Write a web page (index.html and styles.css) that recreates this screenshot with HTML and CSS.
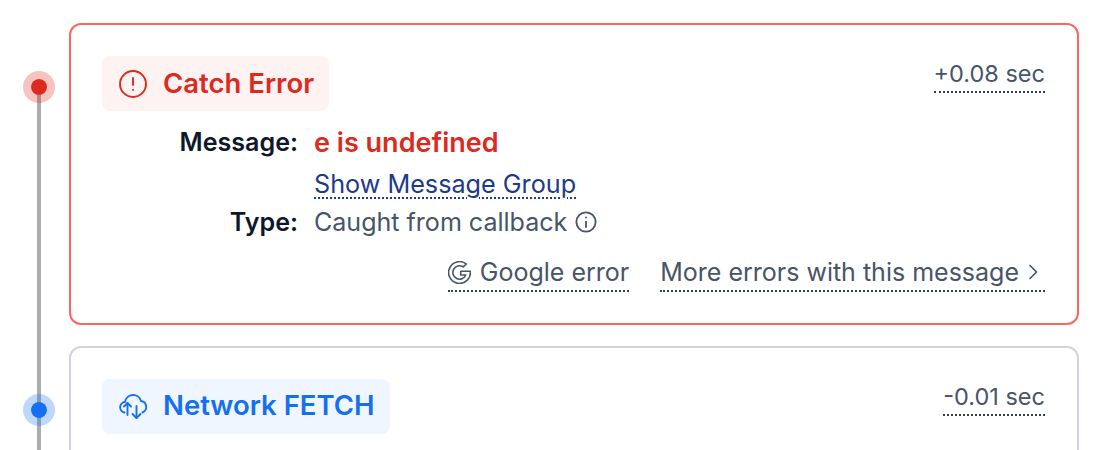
FILE: index.html
```html
<!DOCTYPE html>
<html lang="en">
<head>
<meta charset="utf-8">
<title>Timeline</title>
<link rel="stylesheet" href="styles.css">
</head>
<body>
<div class="timeline">
  <div class="rail-line"></div>
  <section class="event">
    <div class="rail"><span class="dot dot-red"></span></div>
    <div class="card card-red">
      <div class="card-head">
        <div class="badge badge-red">
          <svg class="badge-icon" viewBox="0 0 30 30" fill="none" stroke="currentColor" stroke-width="1.9" stroke-linecap="round"><circle cx="15" cy="15" r="13"/><path d="M15 9v7"/><path d="M15 20.8v.1"/></svg>
          <span class="badge-text">Catch Error</span>
        </div>
        <span class="time">+0.08 sec</span>
      </div>
      <div class="details">
        <div class="label">Message:</div>
        <div class="error-text">e is undefined</div>
        <div></div>
        <div class="group-link">Show Message Group</div>
        <div class="label label-type">Type:</div>
        <div class="type-value">Caught from callback
          <svg class="info-icon" viewBox="0 0 24 24" fill="none" stroke="currentColor" stroke-width="2" stroke-linecap="round"><circle cx="12" cy="12" r="10.5"/><path d="M12 11.5v6"/><path d="M12 7v.1"/></svg>
        </div>
      </div>
      <div class="actions">
        <span class="action action-google">
          <svg class="google-icon" viewBox="2.5 2.5 19 19" fill="none" stroke="currentColor" stroke-width="1.3" stroke-linecap="round" stroke-linejoin="round"><path d="M20.945 11a9 9 0 1 1 -3.284 -5.997l-2.655 2.392a5.5 5.5 0 1 0 2.119 6.605h-4.125v-3h7.945z"/></svg>
          Google error
        </span>
        <span class="action">More errors with this message
          <svg class="chevron" viewBox="0 0 12 16" fill="none" stroke="currentColor" stroke-width="1.7" stroke-linecap="round" stroke-linejoin="round"><path d="M3 1.5l6.5 6.5-6.5 6.5"/></svg>
        </span>
      </div>
    </div>
  </section>
  <section class="event">
    <div class="rail"><span class="dot dot-blue"></span></div>
    <div class="card card-grey">
      <div class="card-head">
        <div class="badge badge-blue">
          <svg class="badge-icon" viewBox="0 0 30 30" fill="none" stroke="currentColor" stroke-width="1.9" stroke-linecap="round" stroke-linejoin="round"><path d="M6.5 21.5A5.3 5.3 0 0 1 7 11a8.2 8.2 0 0 1 16-1a6 6 0 0 1 1.5 11.5"/><path d="M9.5 24V12"/><path d="M6 15.5l3.5-3.5 3.5 3.5"/><path d="M18.5 15v12"/><path d="M14.5 23l4 4 4-4"/></svg>
          <span class="badge-text">Network FETCH</span>
        </div>
        <span class="time">-0.01 sec</span>
      </div>
    </div>
  </section>
</div>
</body>
</html>
```
FILE: styles.css
```css
html, body {
  margin: 0;
  height: 450px;
  overflow: hidden;
  background: #fff;
}
body {
  font-family: Inter, "Liberation Sans", sans-serif;
  color: #475569;
}
.timeline {
  position: relative;
  height: 427px;
  overflow: hidden;
  padding: 23px 21px 0 0;
}
.rail-line {
  position: absolute;
  left: 37px;
  top: 87px;
  bottom: 0;
  width: 4px;
  background: #abacb0;
}
.event {
  display: flex;
  margin-bottom: 20.5px;
}
.rail {
  width: 69px;
  flex: none;
  padding: 48px 0 0 23px;
  box-sizing: border-box;
  position: relative;
}
.dot {
  display: block;
  width: 16px;
  height: 16px;
  border-radius: 50%;
  border: 8px solid;
  background-clip: padding-box;
}
.dot-red {
  background-color: #dc2b1e;
  border-color: rgba(220, 43, 30, .28);
}
.dot-blue {
  background-color: #1570ef;
  border-color: rgba(21, 112, 239, .28);
}
.card {
  flex: 1;
  box-sizing: border-box;
  border: 2px solid;
  border-radius: 12px;
  padding: 31px 32px 0 31px;
}
.card-red { border-color: #f9685e; height: 302px; }
.card-grey { border-color: #d0d5dd; height: 200px; }
.card-head {
  display: flex;
  justify-content: space-between;
  align-items: flex-start;
}
.badge {
  display: flex;
  align-items: center;
  gap: 15px;
  height: 55px;
  padding: 0 15px 0 16px;
  border-radius: 8px;
  font-size: 27.5px;
  font-weight: 600;
}
.badge-text { margin-bottom: 2px; }
.badge-red { background: #fef3f2; color: #dc2b1e; }
.badge-blue { background: #eff6ff; color: #1570ef; }
.badge-icon { width: 30px; height: 30px; flex: none; }
.time {
  font-size: 23.5px;
  line-height: 30px;
  padding: 0 0 2px;
  margin-top: 3px;
  border-bottom: 2px dotted #344054;
}
.details {
  display: grid;
  grid-template-columns: 196px 1fr;
  column-gap: 16px;
  margin-top: 14px;
}
.label {
  text-align: right;
  color: #0f172a;
  font-size: 25.1px;
  font-weight: 600;
  line-height: 34px;
}
.label-type { margin-top: 3px; }
.error-text {
  color: #dc2b1e;
  font-size: 27.05px;
  font-weight: 600;
  line-height: 36px;
}
.group-link {
  color: #1e3a8a;
  font-size: 25.2px;
  line-height: 36px;
  margin-top: 5px;
  text-decoration: underline dotted 2px;
  text-underline-offset: 4px;
}
.type-value {
  font-size: 25.05px;
  line-height: 36px;
  margin-top: 2px;
  display: flex;
  align-items: center;
  gap: 8px;
}
.info-icon { width: 22px; height: 22px; }
.actions {
  display: flex;
  justify-content: flex-end;
  gap: 31px;
  margin-top: 15px;
}
.action {
  display: flex;
  align-items: center;
  gap: 8px;
  font-size: 25px;
  line-height: 34px;
  padding-bottom: 1px;
  border-bottom: 2px dotted #344054;
}
.action-google { gap: 9px; }
.google-icon { width: 23px; height: 23px; }
.chevron { width: 12px; height: 16px; margin-right: 6px; }
```
